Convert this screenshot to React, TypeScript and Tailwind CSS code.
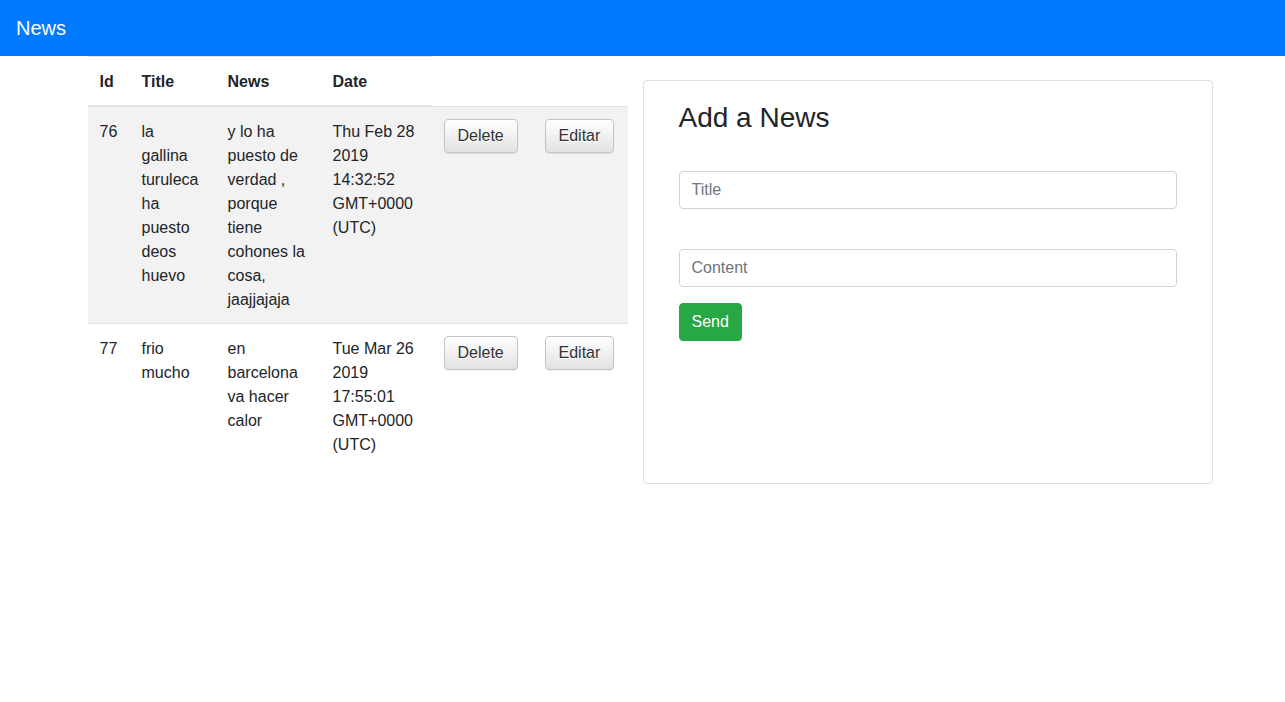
const news = [
  {
    id: 76,
    title: 'la gallina turuleca ha puesto deos huevo',
    content: 'y lo ha puesto de verdad , porque tiene cohones la cosa, jaajjajaja',
    date: 'Thu Feb 28 2019 14:32:52 GMT+0000 (UTC)',
  },
  {
    id: 77,
    title: 'frio mucho',
    content: 'en barcelona va hacer calor',
    date: 'Tue Mar 26 2019 17:55:01 GMT+0000 (UTC)',
  },
];

function ThemeButton({ children }: { children: string }) {
  return (
    <button
      type="button"
      className="rounded-[4px] border border-[#c4c4c4] bg-gradient-to-b from-white to-[#e2e2e2] px-[13px] py-[4px] text-[16px] leading-[24px] text-[#333] shadow-[0_1px_1px_rgba(0,0,0,0.075)] [text-shadow:0_1px_0_#fff]"
    >
      {children}
    </button>
  );
}

export default function App() {
  return (
    <div className="min-h-screen bg-white font-['Liberation_Sans',Arial,sans-serif] text-[16px] leading-[24px] text-[#212529]">
      {/* barra superior */}
      <nav className="flex h-14 items-center bg-[#007bff] px-4">
        <span className="text-[20px] leading-[30px] text-white">News</span>
      </nav>

      <div className="mx-auto w-[1140px] px-[15px]">
        <div className="-mx-[15px] flex items-start">
          {/* tabla de noticias */}
          <div className="w-1/2 px-[15px]">
            <table className="w-full border-collapse text-left">
              <thead>
                <tr>
                  <th className="w-[42px] border-t border-b-2 border-[#dee2e6] px-3 pt-[13px] pb-[11px] align-bottom font-bold">Id</th>
                  <th className="w-[86px] border-t border-b-2 border-[#dee2e6] px-3 pt-[13px] pb-[11px] align-bottom font-bold">Title</th>
                  <th className="w-[105px] border-t border-b-2 border-[#dee2e6] px-3 pt-[13px] pb-[11px] align-bottom font-bold">News</th>
                  <th className="w-[111px] border-t border-b-2 border-[#dee2e6] px-3 pt-[13px] pb-[11px] align-bottom font-bold">Date</th>
                </tr>
              </thead>
              <tbody>
                {news.map((item, i) => (
                  <tr key={item.id} className={i % 2 === 0 ? 'bg-[#f2f2f2]' : ''}>
                    <td className="border-t border-[#dee2e6] px-3 pt-[13px] pb-[11px] align-top">{item.id}</td>
                    <td className="border-t border-[#dee2e6] px-3 pt-[13px] pb-[11px] align-top">{item.title}</td>
                    <td className="border-t border-[#dee2e6] px-3 pt-[13px] pb-[11px] align-top">{item.content}</td>
                    <td className="border-t border-[#dee2e6] px-3 pt-[13px] pb-[11px] align-top">{item.date}</td>
                    <td className="w-[101px] border-t border-[#dee2e6] p-3 align-top">
                      <ThemeButton>Delete</ThemeButton>
                    </td>
                    <td className="border-t border-[#dee2e6] p-3 align-top">
                      <ThemeButton>Editar</ThemeButton>
                    </td>
                  </tr>
                ))}
              </tbody>
            </table>
          </div>

          {/* formulario: la columna es la propia tarjeta */}
          <div className="mt-6 h-[404px] w-1/2 rounded-[4px] border border-[#dfdfdf] px-[35px] py-5">
            <h3 className="mb-[36px] text-[28px] font-normal leading-[34px]">Add a News</h3>
            <input
              type="text"
              placeholder="Title"
              className="block h-[38px] w-full rounded-[4px] border border-[#ced4da] px-3 py-1.5 text-[16px] placeholder:text-[#6c757d] focus:outline-none"
            />
            <input
              type="text"
              placeholder="Content"
              className="mt-10 block h-[38px] w-full rounded-[4px] border border-[#ced4da] px-3 py-1.5 text-[16px] placeholder:text-[#6c757d] focus:outline-none"
            />
            <button
              type="button"
              className="mt-4 rounded-[4px] border border-[#28a745] bg-[#28a745] px-3 py-1.5 text-[16px] leading-[24px] text-white"
            >
              Send
            </button>
          </div>
        </div>
      </div>
    </div>
  );
}
